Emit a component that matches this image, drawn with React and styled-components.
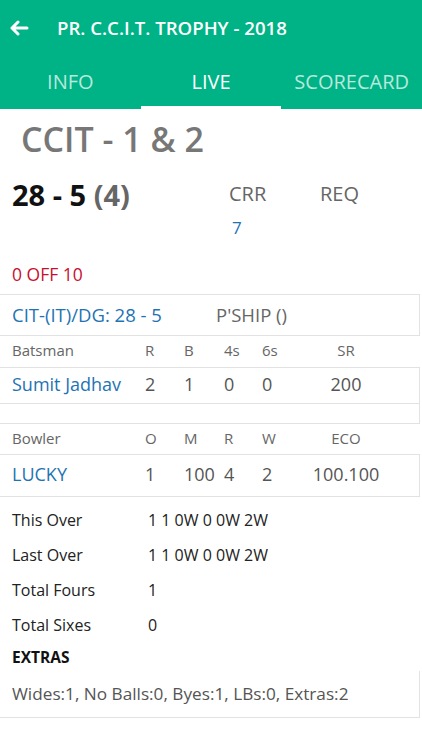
import React from "react";
import styled, { createGlobalStyle } from "styled-components";

const GlobalStyle = createGlobalStyle`
  body {
    margin: 0;
    background: #fff;
    font-family: "Open Sans", "Noto Sans", sans-serif;
  }
`;

const batsmen = [{ name: "Sumit Jadhav", r: 2, b: 1, fours: 0, sixes: 0, sr: 200 }];
const bowlers = [{ name: "LUCKY", o: 1, m: 100, r: 4, w: 2, eco: "100.100" }];
const stats = [
  ["This Over", "1 1 0W 0 0W 2W"],
  ["Last Over", "1 1 0W 0 0W 2W"],
  ["Total Fours", "1"],
  ["Total Sixes", "0"],
];

const App = () => {
  return (
    <Page>
      <GlobalStyle />
      <Header>
        <TopBar>
          <BackButton>
            <svg width="20" height="16" viewBox="0 0 20 16" fill="none">
              <path d="M18 8H3M9 2L3 8l6 6" stroke="#fff" strokeWidth="3" strokeLinecap="round" strokeLinejoin="round" />
            </svg>
          </BackButton>
          <Title>PR. C.C.I.T. TROPHY - 2018</Title>
        </TopBar>
        <Tabs>
          <Tab>INFO</Tab>
          <Tab active>LIVE</Tab>
          <Tab>SCORECARD</Tab>
        </Tabs>
      </Header>

      <TeamName>CCIT - 1 &amp; 2</TeamName>

      <ScoreRow>
        <Score>
          28 - 5 <Overs>(4)</Overs>
        </Score>
        <RateCol>
          <RateLabel>CRR</RateLabel>
          <RateValue>7</RateValue>
        </RateCol>
        <RateCol>
          <RateLabel>REQ</RateLabel>
        </RateCol>
      </ScoreRow>

      <Target>0 OFF 10</Target>

      <Card height={42}>
        <PartnerLine>
          <LinkText>CIT-(IT)/DG: 28 - 5</LinkText>
          <Muted>P'SHIP ()</Muted>
        </PartnerLine>
      </Card>

      <GridRow height={31}>
        <HeadCell>Batsman</HeadCell>
        <HeadCell>R</HeadCell>
        <HeadCell>B</HeadCell>
        <HeadCell>4s</HeadCell>
        <HeadCell>6s</HeadCell>
        <HeadCell center>SR</HeadCell>
      </GridRow>
      <Card>
        {batsmen.map((p) => (
          <GridRow key={p.name} height={36} divider>
            <NameCell>{p.name}</NameCell>
            <ValueCell>{p.r}</ValueCell>
            <ValueCell>{p.b}</ValueCell>
            <ValueCell>{p.fours}</ValueCell>
            <ValueCell>{p.sixes}</ValueCell>
            <ValueCell center>{p.sr}</ValueCell>
          </GridRow>
        ))}
        <EmptyRow />
      </Card>

      <GridRow height={30}>
        <HeadCell>Bowler</HeadCell>
        <HeadCell>O</HeadCell>
        <HeadCell>M</HeadCell>
        <HeadCell>R</HeadCell>
        <HeadCell>W</HeadCell>
        <HeadCell center>ECO</HeadCell>
      </GridRow>
      <Card>
        {bowlers.map((p) => (
          <GridRow key={p.name} height={41}>
            <NameCell>{p.name}</NameCell>
            <ValueCell>{p.o}</ValueCell>
            <ValueCell>{p.m}</ValueCell>
            <ValueCell>{p.r}</ValueCell>
            <ValueCell>{p.w}</ValueCell>
            <ValueCell center>{p.eco}</ValueCell>
          </GridRow>
        ))}
      </Card>

      <Stats>
        {stats.map(([label, value]) => (
          <StatRow key={label}>
            <StatLabel>{label}</StatLabel>
            <span>{value}</span>
          </StatRow>
        ))}
      </Stats>

      <ExtrasTitle>EXTRAS</ExtrasTitle>
      <ExtrasCard>Wides:1, No Balls:0, Byes:1, LBs:0, Extras:2</ExtrasCard>
    </Page>
  );
};

export default App;

const Page = styled.div`
  width: 422px;
  min-height: 750px;
  background: #fff;
`;

const Header = styled.header`
  background: #00b386;
  color: #fff;
`;

const TopBar = styled.div`
  display: flex;
  align-items: center;
  height: 55px;
`;

const BackButton = styled.div`
  display: flex;
  align-items: center;
  width: 57px;
  padding-left: 9px;
  box-sizing: border-box;
`;

const Title = styled.h1`
  margin: 0;
  font-size: 18.6px;
  font-weight: 600;
`;

const Tabs = styled.nav`
  display: grid;
  grid-template-columns: repeat(3, 1fr);
  height: 54px;
`;

const Tab = styled.div`
  display: flex;
  align-items: center;
  justify-content: center;
  font-size: 20px;
  padding-top: 1px;
  color: ${(p) => (p.active ? "#fff" : "rgba(255,255,255,0.72)")};
  border-bottom: 3px solid ${(p) => (p.active ? "#fff" : "transparent")};
`;

const TeamName = styled.div`
  padding: 7px 0 0 21px;
  height: 52px;
  font-size: 34px;
  font-weight: 600;
  color: #777;
  line-height: 46px;
`;

const ScoreRow = styled.div`
  display: flex;
  padding: 12px 0 0 12px;
  height: 66px;
`;

const Score = styled.div`
  width: 217px;
  font-size: 29px;
  font-weight: 700;
  color: #111;
  line-height: 30px;
`;

const Overs = styled.span`
  color: #666;
`;

const RateCol = styled.div`
  display: flex;
  flex-direction: column;
  align-items: flex-start;
  width: 91px;
`;

const RateLabel = styled.span`
  font-size: 20px;
  color: #666;
  line-height: 28px;
`;

const RateValue = styled.span`
  font-size: 17px;
  color: #1e73b4;
  line-height: 24px;
  margin-top: 8px;
  padding-left: 3px;
`;

const Target = styled.div`
  padding-left: 12px;
  margin-top: 17px;
  height: 31px;
  font-size: 17.5px;
  color: #c8102e;
  line-height: 22px;
`;

const Card = styled.div`
  margin-right: 2px;
  border: 1px solid #e2e2e2;
  border-left: none;
  box-sizing: border-box;
  height: ${(p) => (p.height ? `${p.height}px` : "auto")};
  display: flex;
  flex-direction: column;
  justify-content: center;
`;

const PartnerLine = styled.div`
  display: flex;
  padding: 0 0 2px 12px;
  font-size: 18.5px;
`;

const LinkText = styled.span`
  color: #1e73b4;
  width: 204px;
`;

const Muted = styled.span`
  color: #666;
`;

const GridRow = styled.div`
  display: grid;
  grid-template-columns: 133px 39px 40px 38px 38px 92px;
  align-items: center;
  padding: 0 0 3px 12px;
  height: ${(p) => p.height}px;
  border-bottom: ${(p) => (p.divider ? "1px solid #e2e2e2" : "none")};
  box-sizing: border-box;
`;

const HeadCell = styled.span`
  font-size: 15px;
  color: #666;
  text-align: ${(p) => (p.center ? "center" : "left")};
`;

const NameCell = styled.span`
  font-size: 18px;
  color: #1e73b4;
  white-space: nowrap;
`;

const ValueCell = styled.span`
  font-size: 18px;
  color: #555;
  text-align: ${(p) => (p.center ? "center" : "left")};
`;

const EmptyRow = styled.div`
  height: 19px;
`;

const Stats = styled.div`
  padding-top: 6px;
`;

const StatRow = styled.div`
  display: flex;
  align-items: center;
  height: 35px;
  padding: 0 0 2px 12px;
  box-sizing: border-box;
  font-size: 16px;
  color: #222;
`;

const StatLabel = styled.span`
  width: 136px;
`;

const ExtrasTitle = styled.div`
  display: flex;
  align-items: center;
  height: 28px;
  padding-left: 12px;
  font-size: 15.5px;
  font-weight: 700;
  color: #111;
`;

const ExtrasCard = styled.div`
  display: flex;
  align-items: center;
  margin-right: 2px;
  height: 47px;
  box-sizing: border-box;
  border-right: 1px solid #e2e2e2;
  border-bottom: 1px solid #e2e2e2;
  padding: 0 0 2px 12px;
  font-size: 17.2px;
  color: #555;
`;
